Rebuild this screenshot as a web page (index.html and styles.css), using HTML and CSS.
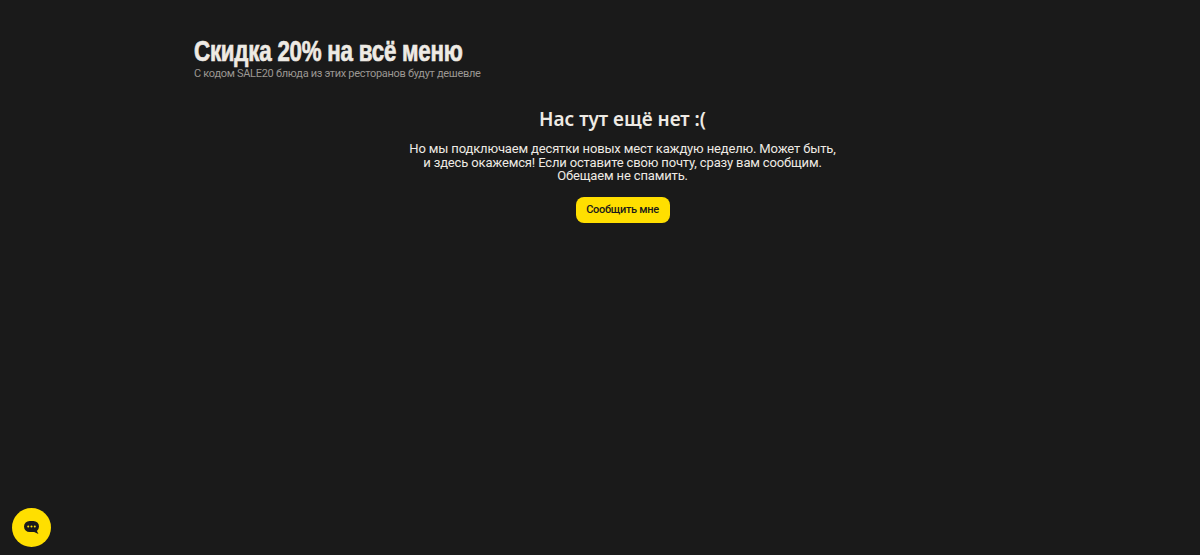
FILE: index.html
```html
<!DOCTYPE html>
<html lang="ru">
  <head>
    <meta charset="utf-8" />
    <meta name="viewport" content="width=device-width, initial-scale=1.0" />
    <title>Скидка 20% на всё меню</title>
    <link rel="stylesheet" href="styles.css">
  </head>

  <body>
    <main class="page">
      <header class="promo">
        <h1 class="promo-title">Скидка 20% на всё меню</h1>
        <p class="promo-text">С кодом SALE20 блюда из этих ресторанов будут дешевле</p>
      </header>
      <section class="empty">
        <h2 class="empty-title">Нас тут ещё нет :(</h2>
        <p class="empty-text">Но мы подключаем десятки новых мест каждую неделю. Может быть,<br>и здесь окажемся! Если оставите свою почту, сразу вам сообщим.<br>Обещаем не спамить.</p>
        <button class="notify-btn">Сообщить мне</button>
      </section>
    </main>
    <button class="chat-btn" aria-label="Чат">
      <svg width="17" height="15" viewBox="0 0 18 16">
        <path d="M7 1h4a6 6 0 0 1 6 6 6 6 0 0 1-2.2 4.6l1.6 3.2-4.6-1.9H7a6 6 0 0 1-6-6 6 6 0 0 1 6-5.9z" fill="#1a1a1a"/>
        <circle cx="5.5" cy="7" r="1.1" fill="#ffdf00"/>
        <circle cx="9" cy="7" r="1.1" fill="#ffdf00"/>
        <circle cx="12.5" cy="7" r="1.1" fill="#ffdf00"/>
      </svg>
    </button>
  </body>
</html>
```

FILE: styles.css
```css
* {
  box-sizing: border-box;
}

html,
body {
  height: 100%;
}

body {
  margin: 0;
  background-color: #1a1a1a;
  color: #eeeae4;
  font-family: Roboto, "Noto Sans", sans-serif;
  overflow: hidden;
}

.page {
  width: 857px;
  margin-left: 194px;
  padding-top: 36px;
}

/* no condensed face installed, so squeeze the bold one */
.promo-title {
  margin: 0;
  font-family: "Liberation Sans", sans-serif;
  font-size: 29px;
  line-height: 30px;
  font-weight: 700;
  letter-spacing: -0.3px;
  white-space: nowrap;
  color: #eeeae4;
  -webkit-text-stroke: 0.7px #eeeae4;
  transform: scaleX(0.77);
  transform-origin: left center;
}

.promo-text {
  margin: 1px 0 0;
  font-size: 11px;
  line-height: 13px;
  letter-spacing: -0.3px;
  color: #9a9792;
}

.empty {
  display: flex;
  flex-direction: column;
  align-items: center;
  margin-top: 26px;
  text-align: center;
}

.empty-title {
  margin: 0;
  font-family: "Noto Sans", sans-serif;
  font-size: 19px;
  line-height: 26px;
  font-weight: 600;
}

.empty-text {
  margin: 10px 0 0;
  font-size: 13px;
  line-height: 13.5px;
  letter-spacing: -0.15px;
}

.notify-btn {
  margin-top: 14px;
  width: 94px;
  height: 26px;
  padding: 0;
  border: 0;
  border-radius: 8px;
  background-color: #ffdf00;
  color: #1a1a1a;
  font-family: inherit;
  font-size: 11px;
  font-weight: 500;
  letter-spacing: -0.3px;
  cursor: pointer;
}

.chat-btn {
  position: fixed;
  left: 12px;
  bottom: 8px;
  display: flex;
  align-items: center;
  justify-content: center;
  width: 39px;
  height: 39px;
  padding: 0;
  border: 0;
  border-radius: 50%;
  background-color: #ffdf00;
  cursor: pointer;
}
```
